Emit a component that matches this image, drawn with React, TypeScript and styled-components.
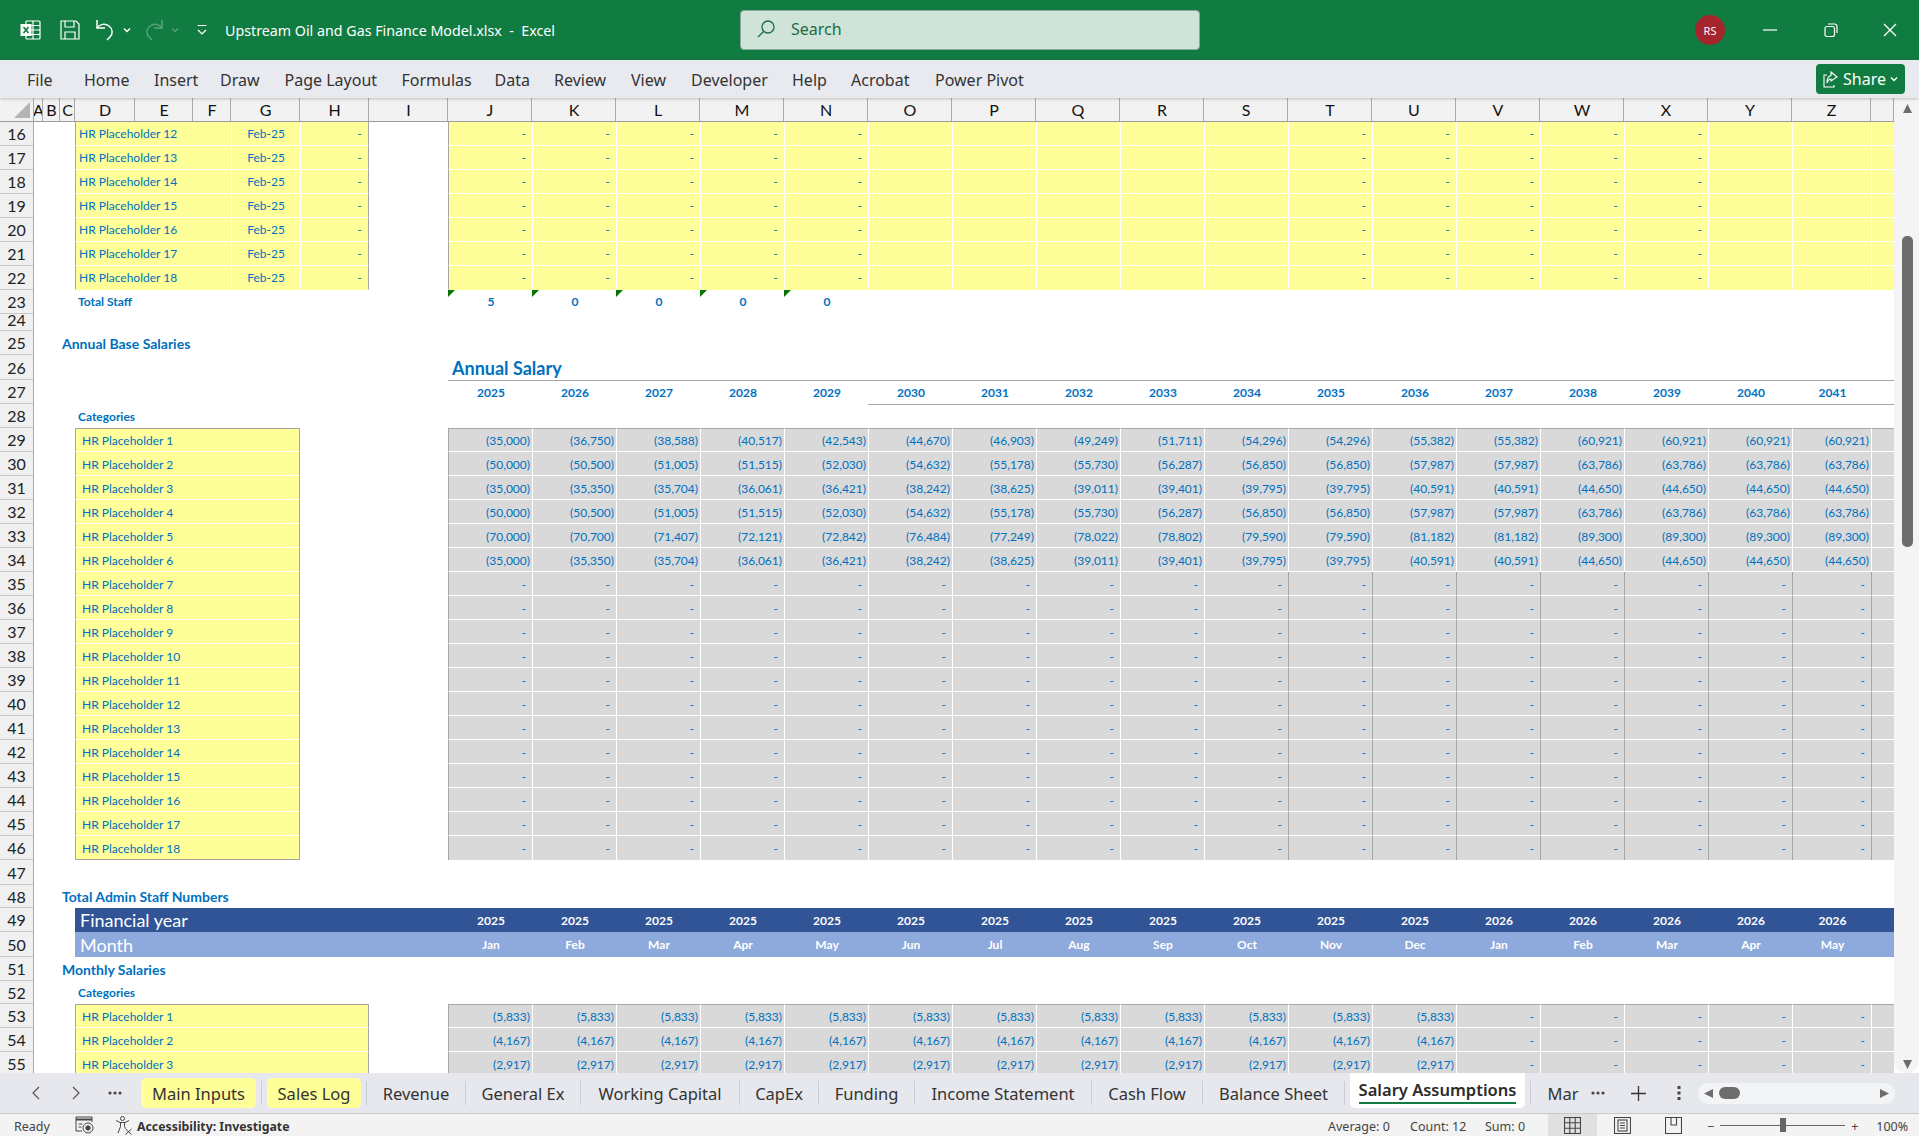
import { Fragment } from "react";
import styled, { createGlobalStyle } from "styled-components";

const GlobalStyle = createGlobalStyle`
  html, body {
    margin: 0;
    padding: 0;
    height: 100%;
    overflow: hidden;
    background: #ffffff;
  }
  #root {
    height: 100%;
  }
`;

const UI_FONT = `"Noto Sans", "Open Sans", sans-serif`;
const CELL_FONT = `Lato, "Liberation Sans", sans-serif`;
const BLUE = "#0070c0";
const RULE = "#a6a6a6";

// grid tracks: row header, A..I, J..Y, Z, AA
const SHEET_COLUMNS = `34px 9px 17px 15px 60px 58px 38px 69px 69px 79px repeat(16, 84px) 79px 23px`;

// grid line numbers of the columns that are referred to below
const D = 5;
const G = 8;
const H = 9;
const I = 10;
const J = 11;
const O = 16;
const T = 21;
const AA = 28;
const END = 29;

const Window = styled.div`
  height: 100vh;
  display: flex;
  flex-direction: column;
  overflow: hidden;
  font-family: ${UI_FONT};
`;

const TitleBar = styled.header`
  height: 60px;
  flex: none;
  background: #107c41;
  display: grid;
  grid-template-columns: 740px 460px 1fr;
  align-items: center;
  color: #ffffff;
`;

const QuickAccess = styled.div`
  display: flex;
  align-items: center;
  padding-left: 20px;
`;

const TitleText = styled.span`
  font-size: 14.25px;
  margin-left: 18px;
  white-space: pre;
`;

const IconSlot = styled.span<{ $w: number; $ml?: number }>`
  display: inline-flex;
  align-items: center;
  justify-content: center;
  width: ${(p) => p.$w}px;
  margin-left: ${(p) => p.$ml ?? 0}px;
  flex: none;
`;

const SearchBox = styled.div`
  height: 40px;
  box-sizing: border-box;
  background: #cfe3d8;
  border: 1px solid #8ba99a;
  border-radius: 4px;
  display: flex;
  align-items: center;
  padding: 0 0 2px 16px;
  gap: 16px;
  color: #1c6b43;
  font-size: 16px;
`;

const WindowControls = styled.div`
  display: flex;
  align-items: center;
  padding-left: 495px;
`;

const Avatar = styled.div`
  width: 30px;
  height: 30px;
  border-radius: 50%;
  background: #a4262c;
  font-size: 11px;
  display: flex;
  align-items: center;
  justify-content: center;
`;

const RibbonBar = styled.nav`
  height: 38px;
  flex: none;
  background: #e8eaef;
  display: flex;
  align-items: center;
  padding: 0 14px 0 27px;
  box-shadow: 0 1px 3px rgba(0, 0, 0, 0.22);
  position: relative;
  z-index: 2;
`;

const RibbonTab = styled.span<{ $w: number }>`
  width: ${(p) => p.$w}px;
  flex: none;
  padding-top: 2px;
  font-size: 16px;
  color: #333333;
  white-space: nowrap;
`;

const ShareButton = styled.button`
  margin-left: auto;
  width: 89px;
  height: 30px;
  border: none;
  border-radius: 4px;
  background: #107c41;
  color: #ffffff;
  font-family: ${UI_FONT};
  font-size: 16px;
  display: flex;
  align-items: center;
  justify-content: center;
  gap: 4px;
  padding: 0;
`;

const Workspace = styled.div`
  flex: 1;
  min-height: 0;
  display: flex;
`;

const SheetPane = styled.div`
  width: 1894px;
  flex: none;
  overflow: hidden;
  background: #ffffff;
`;

const SheetRow = styled.div<{ $h: number }>`
  display: grid;
  grid-template-columns: ${SHEET_COLUMNS};
  height: ${(p) => p.$h}px;
  font-family: ${CELL_FONT};
`;

const HeaderStrip = styled(SheetRow)`
  box-sizing: border-box;
  background: #f2f2f2;
  border-bottom: 1px solid #9c9c9c;
`;

const SelectAll = styled.div`
  border-right: 1px solid #a8a8a8;
  display: flex;
  align-items: flex-end;
  justify-content: flex-end;
  padding: 0 3px 3px 0;
`;

const SelectAllMark = styled.span`
  width: 16px;
  height: 16px;
  background: #b4b4b4;
  clip-path: polygon(100% 0, 100% 100%, 0 100%);
`;

const ColumnLetter = styled.div`
  box-sizing: border-box;
  border-right: 1px solid #ababab;
  padding-left: 1px;
  font-size: 16px;
  color: #111111;
  display: flex;
  align-items: center;
  justify-content: center;
  overflow: hidden;
`;

const RowHead = styled.div<{ $short?: boolean }>`
  grid-column: 1;
  box-sizing: border-box;
  background: #f0f0f0;
  border-right: 1px solid #a8a8a8;
  border-bottom: 1px solid #c6c6c6;
  padding-bottom: ${(p) => (p.$short ? 5 : 0)}px;
  font-size: 16px;
  color: #222222;
  display: flex;
  align-items: center;
  justify-content: center;
  overflow: hidden;
`;

const FILLS = {
  none: "transparent",
  yellow: "#ffff99",
  grey: "#d9d9d9",
  navy: "#305496",
  sky: "#8ea9db",
};

type CellProps = {
  $from: number;
  $to?: number;
  $fill?: keyof typeof FILLS;
  $left?: string;
  $right?: string;
  $top?: string;
  $bottom?: string;
  $align?: "left" | "center" | "right";
  $pad?: string;
  $bold?: boolean;
  $size?: number;
  $color?: string;
};

const JUSTIFY = { left: "flex-start", center: "center", right: "flex-end" };

const Cell = styled.div<CellProps>`
  grid-column: ${(p) => p.$from} / ${(p) => p.$to ?? p.$from + 1};
  position: relative;
  box-sizing: border-box;
  min-width: 0;
  background: ${(p) => FILLS[p.$fill ?? "none"]};
  border-left: ${(p) => (p.$left ? `1px solid ${p.$left}` : "none")};
  border-right: ${(p) => (p.$right ? `1px solid ${p.$right}` : "none")};
  border-top: ${(p) => (p.$top ? `1px solid ${p.$top}` : "none")};
  border-bottom: ${(p) => (p.$bottom ? `1px solid ${p.$bottom}` : "none")};
  padding: ${(p) => p.$pad ?? "0"};
  display: flex;
  align-items: center;
  justify-content: ${(p) => JUSTIFY[p.$align ?? "left"]};
  font-size: ${(p) => p.$size ?? 12}px;
  font-weight: ${(p) => (p.$bold ? 700 : 400)};
  color: ${(p) => p.$color ?? BLUE};
  white-space: nowrap;
`;

const ErrorMark = styled.span`
  position: absolute;
  left: 0;
  top: 0;
  width: 7px;
  height: 7px;
  background: #067306;
  clip-path: polygon(0 0, 100% 0, 0 100%);
`;

const VerticalScroll = styled.aside`
  flex: 1;
  background: #f4f4f4;
  border-radius: 0 0 12px 12px;
  display: flex;
  flex-direction: column;
  align-items: center;
  padding: 6px 0 4px 2px;
`;

const ScrollThumb = styled.div`
  width: 11px;
  height: 311px;
  margin-top: 123px;
  margin-bottom: auto;
  border-radius: 5px;
  background: #6d6d6d;
`;

const TabBar = styled.div`
  height: 40px;
  flex: none;
  background: #e6e8ed;
  display: flex;
  align-items: flex-end;
  padding-bottom: 5px;
  box-sizing: border-box;
`;

const TabNav = styled.div`
  width: 136px;
  height: 30px;
  flex: none;
  display: flex;
  align-items: center;
  color: #555555;
`;

type TabKind = "plain" | "yellow" | "active";

const SheetTab = styled.div<{ $w: number; $kind: TabKind }>`
  width: ${(p) => p.$w}px;
  height: ${(p) => (p.$kind === "active" ? 35 : 30)}px;
  flex: none;
  box-sizing: border-box;
  margin: ${(p) => (p.$kind === "plain" ? "0" : "0 5px")};
  display: flex;
  flex-direction: column;
  align-items: center;
  justify-content: center;
  font-size: 16.5px;
  color: ${(p) => (p.$kind === "active" ? "#2b2b2b" : "#333333")};
  font-weight: ${(p) => (p.$kind === "active" ? 600 : 400)};
  white-space: nowrap;
  background: ${(p) =>
    p.$kind === "yellow" ? "#ffff99" : p.$kind === "active" ? "#ffffff" : "transparent"};
  border-radius: ${(p) => (p.$kind === "active" ? "0 0 5px 5px" : "5px")};
`;

const ActiveLabel = styled.span`
  border-bottom: 2px solid #107c41;
  line-height: 24px;
  margin-top: 1px;
`;

const TabDivider = styled.span`
  width: 1px;
  height: 24px;
  margin-bottom: 3px;
  flex: none;
  background: #c9ccd1;
`;

const TabTools = styled.div`
  height: 30px;
  flex: 1;
  display: flex;
  align-items: center;
`;

const HorizontalScroll = styled.div`
  width: 197px;
  height: 21px;
  margin-left: 17px;
  flex: none;
  border-radius: 11px;
  background: #f3f4f6;
  display: flex;
  align-items: center;
  padding: 0 6px;
  box-sizing: border-box;
`;

const HorizontalThumb = styled.span`
  width: 21px;
  height: 12px;
  margin-left: 6px;
  margin-right: auto;
  border-radius: 6px;
  background: #6d6d6d;
`;

const StatusBar = styled.footer`
  height: 23px;
  flex: none;
  box-sizing: border-box;
  background: #f3f3f3;
  border-top: 1px solid #c8c8c8;
  display: flex;
  align-items: center;
  font-size: 12.5px;
  color: #444444;
`;

const StatusText = styled.span<{ $ml: number; $w?: number; $bold?: boolean }>`
  margin-left: ${(p) => p.$ml}px;
  width: ${(p) => (p.$w ? `${p.$w}px` : "auto")};
  flex: none;
  padding-top: 3px;
  font-size: ${(p) => (p.$bold ? 12.3 : 12.5)}px;
  font-weight: ${(p) => (p.$bold ? 700 : 400)};
  color: ${(p) => (p.$bold ? "#333333" : "#444444")};
  white-space: nowrap;
`;

const ViewButton = styled.span<{ $on?: boolean; $w: number }>`
  width: ${(p) => p.$w}px;
  height: 22px;
  flex: none;
  display: flex;
  align-items: center;
  justify-content: center;
  background: ${(p) => (p.$on ? "#e0e0e0" : "transparent")};
`;

const ZoomTrack = styled.div`
  width: 125px;
  height: 1px;
  margin: 0 6px;
  flex: none;
  background: #666666;
  display: flex;
  align-items: center;
`;

const ZoomKnob = styled.span`
  width: 6px;
  height: 14px;
  margin-left: 60px;
  background: #666666;
`;

const ExcelIcon = () => (
  <svg width="21" height="20" viewBox="0 0 21 20" fill="none" stroke="#fff" strokeWidth="1.2">
    <rect x="6" y="1" width="14" height="18" rx="1" />
    <path d="M13 1v18M6 5.5h14M6 10h14M6 14.5h14" />
    <rect x="0.5" y="4" width="11" height="12" fill="#fff" stroke="none" />
    <path d="M3.5 7l5 6M8.5 7l-5 6" stroke="#107c41" strokeWidth="1.6" />
  </svg>
);

const SaveIcon = () => (
  <svg width="20" height="20" viewBox="0 0 20 20" fill="none" stroke="#fff" strokeWidth="1.2">
    <path d="M1 1h15l3 3v15H1z" />
    <path d="M5 1v6h9V1M5 19v-7h10v7" />
  </svg>
);

const UndoIcon = ({ dim }: { dim?: boolean }) => (
  <svg
    width="20"
    height="22"
    viewBox="0 0 20 22"
    fill="none"
    stroke={dim ? "#56a47c" : "#fff"}
    strokeWidth="1.5"
    style={dim ? { transform: "scaleX(-1)" } : undefined}
  >
    <path d="M2 1v8h8" />
    <path d="M2 9c3-4 8-5 12-2 4 3 4 8 1 11l-3 3" />
  </svg>
);

const Caret = ({ color = "#fff", size = 8 }: { color?: string; size?: number }) => (
  <svg width={size} height={size} viewBox="0 0 8 8" fill="none" stroke={color} strokeWidth="1.4">
    <path d="M1 2.5l3 3 3-3" />
  </svg>
);

const CustomizeIcon = () => (
  <svg width="10" height="12" viewBox="0 0 10 12" fill="none" stroke="#fff" strokeWidth="1.2">
    <path d="M0.5 1.5h9M1 6l4 4 4-4" />
  </svg>
);

const SearchIcon = () => (
  <svg width="18" height="18" viewBox="0 0 18 18" fill="none" stroke="#1c6b43" strokeWidth="1.3">
    <circle cx="11" cy="7" r="6" />
    <path d="M6.5 11.5L1 17" />
  </svg>
);

const MinimizeIcon = () => (
  <svg width="14" height="2" viewBox="0 0 14 2">
    <path d="M0 1h14" stroke="#fff" strokeWidth="1.2" />
  </svg>
);

const RestoreIcon = () => (
  <svg width="14" height="14" viewBox="0 0 14 14" fill="none" stroke="#fff" strokeWidth="1.2">
    <rect x="1" y="3.5" width="9.5" height="10" rx="2" />
    <path d="M4 1h6.5A2.5 2.5 0 0 1 13 3.5V10" />
  </svg>
);

const CloseIcon = () => (
  <svg width="14" height="14" viewBox="0 0 14 14" fill="none" stroke="#fff" strokeWidth="1.3">
    <path d="M1 1l12 12M13 1L1 13" />
  </svg>
);

const ShareIcon = () => (
  <svg width="16" height="17" viewBox="0 0 16 17" fill="none" stroke="#fff" strokeWidth="1.1">
    <path d="M4 4H1v12h10v-2" />
    <path d="M8 1l6 5-6 4V8C6 8 5 9 4 12 4 7 5 5 8 4.5z" />
  </svg>
);

const Triangle = ({ dir, size = 9 }: { dir: "up" | "down" | "left" | "right"; size?: number }) => {
  const points = {
    up: "0,10 5,0 10,10",
    down: "0,0 10,0 5,10",
    left: "10,0 10,10 0,5",
    right: "0,0 0,10 10,5",
  };
  return (
    <svg width={size} height={size} viewBox="0 0 10 10" style={{ flex: "none" }}>
      <polygon points={points[dir]} fill="#6d6d6d" />
    </svg>
  );
};

const ChevronLeft = () => (
  <svg width="8" height="14" viewBox="0 0 8 14" fill="none" stroke="#555" strokeWidth="1.2">
    <path d="M7 1L1 7l6 6" />
  </svg>
);

const ChevronRight = () => (
  <svg width="8" height="14" viewBox="0 0 8 14" fill="none" stroke="#555" strokeWidth="1.2">
    <path d="M1 1l6 6-6 6" />
  </svg>
);

const Dots = () => (
  <svg width="14" height="4" viewBox="0 0 14 4" fill="#444">
    <circle cx="2" cy="2" r="1.6" />
    <circle cx="7" cy="2" r="1.6" />
    <circle cx="12" cy="2" r="1.6" />
  </svg>
);

const PlusIcon = () => (
  <svg width="15" height="15" viewBox="0 0 15 15" stroke="#333" strokeWidth="1.3">
    <path d="M7.5 0v15M0 7.5h15" />
  </svg>
);

const KebabIcon = () => (
  <svg width="4" height="14" viewBox="0 0 4 14" fill="#444">
    <rect x="0.5" y="0" width="3" height="3" />
    <rect x="0.5" y="5.5" width="3" height="3" />
    <rect x="0.5" y="11" width="3" height="3" />
  </svg>
);

const MacroIcon = () => (
  <svg width="19" height="18" viewBox="0 0 19 18" fill="none" stroke="#444" strokeWidth="1">
    <path d="M1 1h16v5M1 1v14h6" />
    <path d="M1 3.5h16" strokeWidth="2" />
    <path d="M3.5 8h4M3.5 11h3" />
    <circle cx="13" cy="12" r="5" />
    <circle cx="13" cy="12" r="2.2" fill="#444" />
  </svg>
);

const AccessibilityIcon = () => (
  <svg width="18" height="19" viewBox="0 0 18 19" fill="none" stroke="#444" strokeWidth="1">
    <circle cx="7.5" cy="2.5" r="2" />
    <path d="M1 4.5l4 2h5l4-2M5.5 6.5v4L3 17M9.5 6.5v4l1 2" />
    <path d="M10.5 13l6 5.5M16.5 13l-6 5.5" />
  </svg>
);

const NormalViewIcon = () => (
  <svg width="17" height="17" viewBox="0 0 17 17" fill="none" stroke="#444" strokeWidth="1.1">
    <rect x="0.5" y="0.5" width="16" height="16" />
    <path d="M5.8 0.5v16M11.2 0.5v16M0.5 5.8h16M0.5 11.2h16" />
  </svg>
);

const PageViewIcon = () => (
  <svg width="17" height="17" viewBox="0 0 17 17" fill="none" stroke="#444" strokeWidth="1.1">
    <rect x="0.5" y="0.5" width="16" height="16" />
    <rect x="4" y="3" width="9" height="11" />
    <path d="M6 6h5M6 8.5h5M6 11h5" />
  </svg>
);

const BreakViewIcon = () => (
  <svg width="17" height="17" viewBox="0 0 17 17" fill="none" stroke="#444" strokeWidth="1.1">
    <path d="M0.5 0.5h16v16H0.5zM6 0.5V8h5.5V0.5" />
  </svg>
);

const COLUMN_LETTERS = "A B C D E F G H I J K L M N O P Q R S T U V W X Y Z".split(" ");

const RIBBON_TABS: [string, number][] = [
  ["File", 57],
  ["Home", 70],
  ["Insert", 66],
  ["Draw", 64.5],
  ["Page Layout", 117],
  ["Formulas", 93],
  ["Data", 59.5],
  ["Review", 77],
  ["View", 60],
  ["Developer", 101],
  ["Help", 59],
  ["Acrobat", 84],
  ["Power Pivot", 120],
];

const SHEET_TABS: { name: string; w: number; kind: TabKind }[] = [
  { name: "Main Inputs", w: 115, kind: "yellow" },
  { name: "Sales Log", w: 94, kind: "yellow" },
  { name: "Revenue", w: 98, kind: "plain" },
  { name: "General Ex", w: 114, kind: "plain" },
  { name: "Working Capital", w: 158, kind: "plain" },
  { name: "CapEx", w: 78, kind: "plain" },
  { name: "Funding", w: 95, kind: "plain" },
  { name: "Income Statement", w: 176, kind: "plain" },
  { name: "Cash Flow", w: 110, kind: "plain" },
  { name: "Balance Sheet", w: 141, kind: "plain" },
  { name: "Salary Assumptions", w: 175, kind: "active" },
  { name: "Mar", w: 64, kind: "plain" },
];

const ANNUAL: Record<number, string[]> = {
  1: ["35,000", "36,750", "38,588", "40,517", "42,543", "44,670", "46,903", "49,249", "51,711", "54,296", "54,296", "55,382", "55,382", "60,921", "60,921", "60,921", "60,921"],
  2: ["50,000", "50,500", "51,005", "51,515", "52,030", "54,632", "55,178", "55,730", "56,287", "56,850", "56,850", "57,987", "57,987", "63,786", "63,786", "63,786", "63,786"],
  3: ["35,000", "35,350", "35,704", "36,061", "36,421", "38,242", "38,625", "39,011", "39,401", "39,795", "39,795", "40,591", "40,591", "44,650", "44,650", "44,650", "44,650"],
  4: ["50,000", "50,500", "51,005", "51,515", "52,030", "54,632", "55,178", "55,730", "56,287", "56,850", "56,850", "57,987", "57,987", "63,786", "63,786", "63,786", "63,786"],
  5: ["70,000", "70,700", "71,407", "72,121", "72,842", "76,484", "77,249", "78,022", "78,802", "79,590", "79,590", "81,182", "81,182", "89,300", "89,300", "89,300", "89,300"],
  6: ["35,000", "35,350", "35,704", "36,061", "36,421", "38,242", "38,625", "39,011", "39,401", "39,795", "39,795", "40,591", "40,591", "44,650", "44,650", "44,650", "44,650"],
};

const MONTHLY: Record<number, string> = { 1: "5,833", 2: "4,167", 3: "2,917" };

const YEARS = Array.from({ length: 17 }, (_, i) => String(2025 + i));
const FINANCIAL_YEARS = Array.from({ length: 17 }, (_, i) => (i < 12 ? "2025" : "2026"));
const MONTHS = ["Jan", "Feb", "Mar", "Apr", "May", "Jun", "Jul", "Aug", "Sep", "Oct", "Nov", "Dec", "Jan", "Feb", "Mar", "Apr", "May"];
const DATA_COLUMNS = Array.from({ length: 17 }, (_, i) => J + i);

// nudges centred data labels onto the column middle, past the gridline
const CENTRE_PAD = "0 0 0 2px";

function ColumnHeader() {
  return (
    <HeaderStrip $h={24}>
      <SelectAll>
        <SelectAllMark />
      </SelectAll>
      {COLUMN_LETTERS.map((letter) => (
        <ColumnLetter key={letter}>{letter}</ColumnLetter>
      ))}
      <ColumnLetter />
    </HeaderStrip>
  );
}

function StaffInputRow({ n, index, last }: { n: number; index: number; last?: boolean }) {
  const line = last ? "#ffff99" : "#ffffff";
  return (
    <SheetRow $h={24}>
      <RowHead>{n}</RowHead>
      <Cell $from={D} $to={G} $fill="yellow" $left={RULE} $bottom={line} $pad="0 0 0 3px">
        HR Placeholder {index}
      </Cell>
      <Cell $from={G} $fill="yellow" $left="#ffffff" $bottom={line} $align="center">
        Feb-25
      </Cell>
      <Cell $from={H} $fill="yellow" $left="#ffffff" $right={RULE} $bottom={line} $align="right" $pad="0 6px 0 0">
        -
      </Cell>
      {DATA_COLUMNS.map((col) => (
        <Cell
          key={col}
          $from={col}
          $fill="yellow"
          $left={col === J ? RULE : "#ffffff"}
          $bottom={line}
          $align="right"
          $pad="0 6px 0 0"
        >
          {col < O || (col >= T && col < T + 5) ? "-" : ""}
        </Cell>
      ))}
      <Cell $from={AA} $fill="yellow" $left="#ffffff" $bottom={line} />
    </SheetRow>
  );
}

function TotalStaffRow() {
  const totals = ["5", "0", "0", "0", "0"];
  return (
    <SheetRow $h={24}>
      <RowHead>23</RowHead>
      <Cell $from={D} $to={G} $bold $pad="0 0 1px 3px">
        Total Staff
      </Cell>
      {totals.map((total, i) => (
        <Cell key={i} $from={J + i} $align="center" $bold $pad="0 0 1px 2px">
          <ErrorMark />
          {total}
        </Cell>
      ))}
    </SheetRow>
  );
}

function LabelRow({ n, h, text, short }: { n: number; h: number; text?: string; short?: boolean }) {
  return (
    <SheetRow $h={h}>
      <RowHead $short={short}>{n}</RowHead>
      {text && (
        <Cell $from={4} $to={I} $bold $size={14} $pad="0 0 0 2px">
          {text}
        </Cell>
      )}
    </SheetRow>
  );
}

function AnnualTitleRow() {
  return (
    <SheetRow $h={25}>
      <RowHead>26</RowHead>
      <Cell $from={J} $to={O} $bold $size={18} $pad="0 0 0 4px">
        Annual Salary
      </Cell>
    </SheetRow>
  );
}

function AnnualYearsRow() {
  return (
    <SheetRow $h={24}>
      <RowHead>27</RowHead>
      {YEARS.map((year, i) => (
        <Cell key={year} $from={J + i} $top={RULE} $align="center" $bold $pad={CENTRE_PAD}>
          {year}
        </Cell>
      ))}
      <Cell $from={AA} $top={RULE} />
    </SheetRow>
  );
}

function CategoriesRow({ n, h, rule }: { n: number; h: number; rule?: boolean }) {
  return (
    <SheetRow $h={h}>
      <RowHead>{n}</RowHead>
      <Cell $from={D} $to={G} $bold $pad="0 0 0 3px">
        Categories
      </Cell>
      {rule && <Cell $from={O} $to={END} $top={RULE} />}
    </SheetRow>
  );
}

function formatAmount(value?: string) {
  return value ? `(${value})` : "-";
}

function ValueRow({
  n,
  index,
  labelTo,
  values,
  first,
  last,
  ruled,
}: {
  n: number;
  index: number;
  labelTo: number;
  values: (string | undefined)[];
  first?: boolean;
  last?: boolean;
  ruled?: boolean;
}) {
  const top = first ? RULE : undefined;
  const bottom = last ? undefined : "#ffffff";
  const nudge = first ? 0 : 1;
  return (
    <SheetRow $h={24}>
      <RowHead>{n}</RowHead>
      <Cell
        $from={D}
        $to={labelTo}
        $fill="yellow"
        $left={RULE}
        $right={RULE}
        $top={top}
        $bottom={last ? RULE : bottom}
        $pad={`${nudge}px 0 0 6px`}
      >
        HR Placeholder {index}
      </Cell>
      {DATA_COLUMNS.map((col, i) => {
        const value = values[i];
        const divider = col === J || (ruled && col >= T) ? RULE : "#ffffff";
        return (
          <Cell
            key={col}
            $from={col}
            $fill="grey"
            $left={divider}
            $top={top}
            $bottom={bottom}
            $align="right"
            $pad={`${nudge}px ${value ? 2 : 6}px 0 0`}
          >
            {formatAmount(value)}
          </Cell>
        );
      })}
      <Cell $from={AA} $fill="grey" $left={ruled ? RULE : "#ffffff"} $top={top} $bottom={bottom} />
    </SheetRow>
  );
}

function BandRow({
  n,
  h,
  label,
  items,
  fill,
}: {
  n: number;
  h: number;
  label: string;
  items: string[];
  fill: "navy" | "sky";
}) {
  return (
    <SheetRow $h={h}>
      <RowHead>{n}</RowHead>
      <Cell $from={D} $to={J} $fill={fill} $size={18} $color="#ffffff" $pad="0 0 0 5px">
        {label}
      </Cell>
      {items.map((item, i) => (
        <Cell key={i} $from={J + i} $fill={fill} $align="center" $bold $color="#ffffff" $pad={CENTRE_PAD}>
          {item}
        </Cell>
      ))}
      <Cell $from={AA} $fill={fill} />
    </SheetRow>
  );
}

export default function App() {
  return (
    <Window>
      <GlobalStyle />
      <TitleBar>
        <QuickAccess>
          <ExcelIcon />
          <IconSlot $w={20} $ml={19}>
            <SaveIcon />
          </IconSlot>
          <IconSlot $w={20} $ml={15}>
            <UndoIcon />
          </IconSlot>
          <IconSlot $w={8} $ml={8}>
            <Caret />
          </IconSlot>
          <IconSlot $w={20} $ml={13}>
            <UndoIcon dim />
          </IconSlot>
          <IconSlot $w={8} $ml={7}>
            <Caret color="#56a47c" />
          </IconSlot>
          <IconSlot $w={10} $ml={18}>
            <CustomizeIcon />
          </IconSlot>
          <TitleText>Upstream Oil and Gas Finance Model.xlsx  -  Excel</TitleText>
        </QuickAccess>
        <SearchBox>
          <SearchIcon />
          Search
        </SearchBox>
        <WindowControls>
          <Avatar>RS</Avatar>
          <IconSlot $w={14} $ml={38}>
            <MinimizeIcon />
          </IconSlot>
          <IconSlot $w={14} $ml={47}>
            <RestoreIcon />
          </IconSlot>
          <IconSlot $w={14} $ml={45}>
            <CloseIcon />
          </IconSlot>
        </WindowControls>
      </TitleBar>

      <RibbonBar>
        {RIBBON_TABS.map(([name, w]) => (
          <RibbonTab key={name} $w={w}>
            {name}
          </RibbonTab>
        ))}
        <ShareButton>
          <ShareIcon />
          Share
          <Caret />
        </ShareButton>
      </RibbonBar>

      <Workspace>
        <SheetPane>
          <ColumnHeader />
          {[12, 13, 14, 15, 16, 17, 18].map((index, i) => (
            <StaffInputRow key={index} n={16 + i} index={index} last={index === 18} />
          ))}
          <TotalStaffRow />
          <LabelRow n={24} h={17} short />
          <LabelRow n={25} h={24} text="Annual Base Salaries" />
          <AnnualTitleRow />
          <AnnualYearsRow />
          <CategoriesRow n={28} h={24} rule />
          {Array.from({ length: 18 }, (_, i) => (
            <ValueRow
              key={i}
              n={29 + i}
              index={i + 1}
              labelTo={H}
              values={ANNUAL[i + 1] ?? []}
              first={i === 0}
              last={i === 17}
              ruled={i >= 6}
            />
          ))}
          <LabelRow n={47} h={25} />
          <LabelRow n={48} h={23} text="Total Admin Staff Numbers" />
          <BandRow n={49} h={24} label="Financial year" items={FINANCIAL_YEARS} fill="navy" />
          <BandRow n={50} h={25} label="Month" items={MONTHS} fill="sky" />
          <LabelRow n={51} h={24} text="Monthly Salaries" />
          <CategoriesRow n={52} h={23} />
          {[1, 2, 3].map((index, i) => (
            <ValueRow
              key={index}
              n={53 + i}
              index={index}
              labelTo={I}
              values={DATA_COLUMNS.map((_, c) => (c < 12 ? MONTHLY[index] : undefined))}
              first={i === 0}
            />
          ))}
        </SheetPane>
        <VerticalScroll>
          <Triangle dir="up" />
          <ScrollThumb />
          <Triangle dir="down" />
        </VerticalScroll>
      </Workspace>

      <TabBar>
        <TabNav>
          <IconSlot $w={8} $ml={32}>
            <ChevronLeft />
          </IconSlot>
          <IconSlot $w={8} $ml={32}>
            <ChevronRight />
          </IconSlot>
          <IconSlot $w={14} $ml={28}>
            <Dots />
          </IconSlot>
        </TabNav>
        {SHEET_TABS.map((tab) => (
          <Fragment key={tab.name}>
            <SheetTab $w={tab.w} $kind={tab.kind}>
              {tab.kind === "active" ? <ActiveLabel>{tab.name}</ActiveLabel> : tab.name}
            </SheetTab>
            {tab.name !== "Mar" && <TabDivider />}
          </Fragment>
        ))}
        <TabTools>
          <IconSlot $w={14} $ml={-4}>
            <Dots />
          </IconSlot>
          <IconSlot $w={15} $ml={26}>
            <PlusIcon />
          </IconSlot>
          <IconSlot $w={4} $ml={31}>
            <KebabIcon />
          </IconSlot>
          <HorizontalScroll>
            <Triangle dir="left" />
            <HorizontalThumb />
            <Triangle dir="right" />
          </HorizontalScroll>
        </TabTools>
      </TabBar>

      <StatusBar>
        <StatusText $ml={14} $w={36}>
          Ready
        </StatusText>
        <IconSlot $w={19} $ml={25}>
          <MacroIcon />
        </IconSlot>
        <IconSlot $w={18} $ml={21}>
          <AccessibilityIcon />
        </IconSlot>
        <StatusText $ml={4} $w={1191} $bold>
          Accessibility: Investigate
        </StatusText>
        <StatusText $ml={0} $w={82}>
          Average: 0
        </StatusText>
        <StatusText $ml={0} $w={75}>
          Count: 12
        </StatusText>
        <StatusText $ml={0} $w={63}>
          Sum: 0
        </StatusText>
        <ViewButton $on $w={49}>
          <NormalViewIcon />
        </ViewButton>
        <ViewButton $w={51}>
          <PageViewIcon />
        </ViewButton>
        <ViewButton $w={50}>
          <BreakViewIcon />
        </ViewButton>
        <StatusText $ml={9}>−</StatusText>
        <ZoomTrack>
          <ZoomKnob />
        </ZoomTrack>
        <StatusText $ml={0}>+</StatusText>
        <StatusText $ml={18}>100%</StatusText>
      </StatusBar>
    </Window>
  );
}
